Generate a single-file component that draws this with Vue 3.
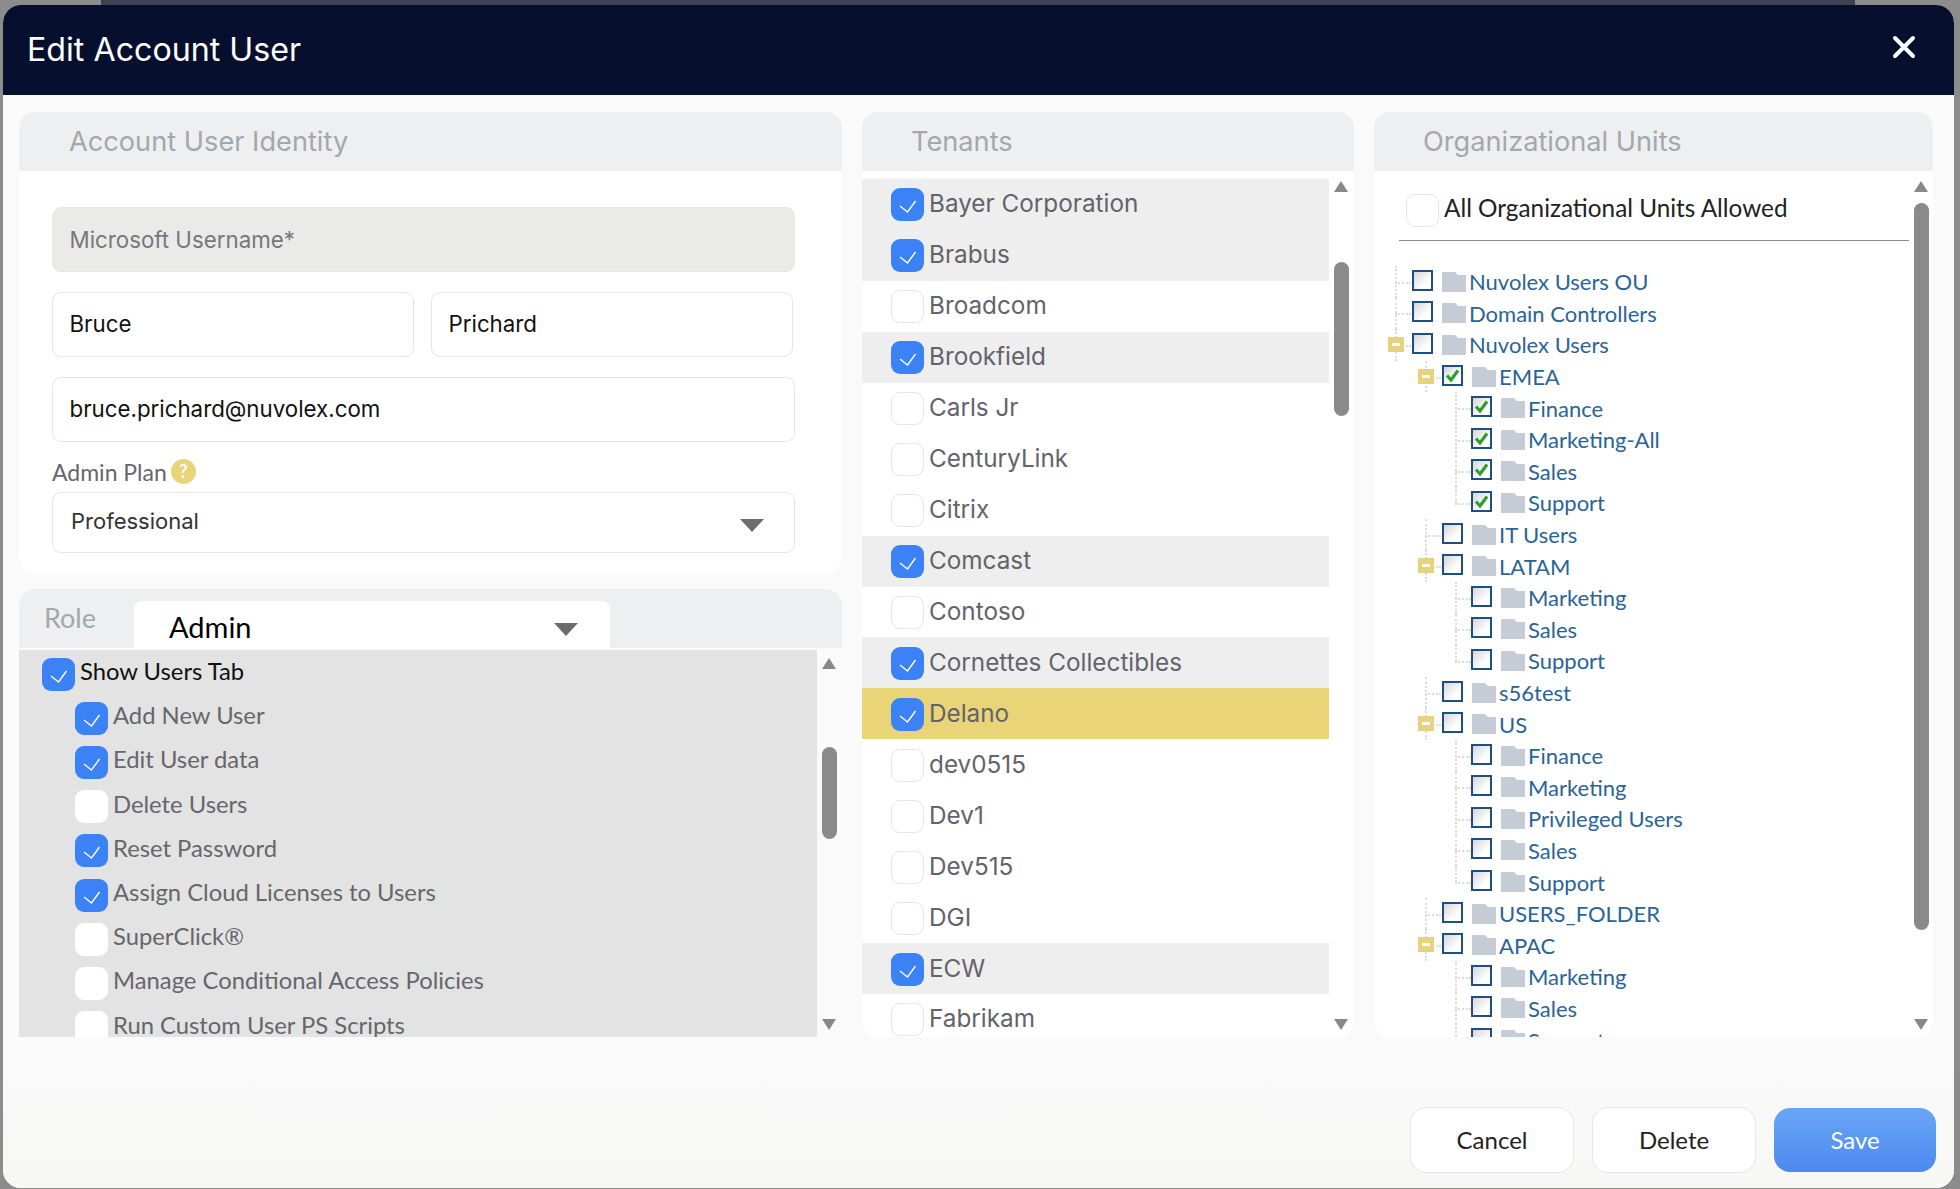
<script setup>
const roleItems = [
	{ label: "Show Users Tab", checked: true, top: true },
	{ label: "Add New User", checked: true },
	{ label: "Edit User data", checked: true },
	{ label: "Delete Users", checked: false },
	{ label: "Reset Password", checked: true },
	{ label: "Assign Cloud Licenses to Users", checked: true },
	{ label: "SuperClick®", checked: false },
	{ label: "Manage Conditional Access Policies", checked: false },
	{ label: "Run Custom User PS Scripts", checked: false },
];

const tenants = [
	{ name: "Bayer Corporation", checked: true },
	{ name: "Brabus", checked: true },
	{ name: "Broadcom", checked: false },
	{ name: "Brookfield", checked: true },
	{ name: "Carls Jr", checked: false },
	{ name: "CenturyLink", checked: false },
	{ name: "Citrix", checked: false },
	{ name: "Comcast", checked: true },
	{ name: "Contoso", checked: false },
	{ name: "Cornettes Collectibles", checked: true },
	{ name: "Delano", checked: true, active: true },
	{ name: "dev0515", checked: false },
	{ name: "Dev1", checked: false },
	{ name: "Dev515", checked: false },
	{ name: "DGI", checked: false },
	{ name: "ECW", checked: true },
	{ name: "Fabrikam", checked: false },
];

// flat list, level decides the indent and the connector lines
const units = [
	{ name: "Nuvolex Users OU", level: 0 },
	{ name: "Domain Controllers", level: 0 },
	{ name: "Nuvolex Users", level: 0, open: true },
	{ name: "EMEA", level: 1, open: true, checked: true },
	{ name: "Finance", level: 2, checked: true },
	{ name: "Marketing-All", level: 2, checked: true },
	{ name: "Sales", level: 2, checked: true },
	{ name: "Support", level: 2, checked: true, last: true },
	{ name: "IT Users", level: 1 },
	{ name: "LATAM", level: 1, open: true },
	{ name: "Marketing", level: 2 },
	{ name: "Sales", level: 2 },
	{ name: "Support", level: 2, last: true },
	{ name: "s56test", level: 1 },
	{ name: "US", level: 1, open: true },
	{ name: "Finance", level: 2 },
	{ name: "Marketing", level: 2 },
	{ name: "Privileged Users", level: 2 },
	{ name: "Sales", level: 2 },
	{ name: "Support", level: 2, last: true },
	{ name: "USERS_FOLDER", level: 1 },
	{ name: "APAC", level: 1, open: true },
	{ name: "Marketing", level: 2 },
	{ name: "Sales", level: 2 },
	{ name: "Support", level: 2 },
];
</script>

<template>
	<div class="page">
		<div class="strip"></div>
		<div class="modal">
			<header class="modal-head">
				<h1>Edit Account User</h1>
				<svg class="close" viewBox="0 0 24 24" width="24" height="24">
					<path d="M3 3 21 21M21 3 3 21" stroke="#fff" stroke-width="4" stroke-linecap="round" />
				</svg>
			</header>

			<div class="modal-body">
				<div class="col-left">
					<section class="panel identity">
						<h2 class="panel-title">Account User Identity</h2>
						<div class="form">
							<input class="field disabled" placeholder="Microsoft Username*" readonly />
							<div class="name-row">
								<input class="field" value="Bruce" readonly />
								<input class="field" value="Prichard" readonly />
							</div>
							<input class="field" value="bruce.prichard@nuvolex.com" readonly />
							<div class="plan-label">
								Admin Plan
								<span class="help">?</span>
							</div>
							<div class="plan-select">
								<span class="plan-value">Professional</span>
								<i class="caret"></i>
							</div>
						</div>
					</section>

					<section class="panel role">
						<div class="role-head">
							<span class="role-label">Role</span>
							<div class="role-tab">
								<span>Admin</span>
								<i class="caret"></i>
							</div>
						</div>
						<div class="scroll-wrap">
							<ul class="role-list">
								<li v-for="item in roleItems" :key="item.label" :class="{ top: item.top }">
									<span class="box" :class="{ on: item.checked }">
										<svg v-if="item.checked" viewBox="0 0 33 33" width="33" height="33">
											<path d="M9 18 16.5 24 24.5 13" fill="none" stroke="#fff" stroke-width="1.4" />
										</svg>
									</span>
									<span class="role-text">{{ item.label }}</span>
								</li>
							</ul>
							<div class="scrollbar role-bar">
								<i class="arrow up"></i>
								<i class="thumb"></i>
								<i class="arrow down"></i>
							</div>
						</div>
					</section>
				</div>

				<section class="panel tenants">
					<h2 class="panel-title">Tenants</h2>
					<div class="scroll-wrap">
						<ul class="tenant-list">
							<li
								v-for="t in tenants"
								:key="t.name"
								:class="{ picked: t.checked, active: t.active }"
							>
								<span class="box" :class="{ on: t.checked }">
									<svg v-if="t.checked" viewBox="0 0 33 33" width="33" height="33">
										<path d="M9 18 16.5 24 24.5 13" fill="none" stroke="#fff" stroke-width="1.4" />
									</svg>
								</span>
								<span class="tenant-name">{{ t.name }}</span>
							</li>
						</ul>
						<div class="scrollbar tenant-bar">
							<i class="arrow up"></i>
							<i class="thumb"></i>
							<i class="arrow down"></i>
						</div>
					</div>
				</section>

				<section class="panel units">
					<h2 class="panel-title">Organizational Units</h2>
					<div class="scroll-wrap">
						<div class="units-inner">
							<div class="all-units">
								<span class="box"></span>
								<span>All Organizational Units Allowed</span>
							</div>
							<ul class="tree">
								<li
									v-for="(u, i) in units"
									:key="i"
									class="node"
									:class="['lvl' + u.level, { last: u.last, open: u.open }]"
								>
									<span v-if="u.open" class="toggle"></span>
									<span class="tree-box">
										<svg v-if="u.checked" viewBox="0 0 17 17" width="17" height="17">
											<path d="M3 8.5 7 13 14 3.5" fill="none" stroke="#2ca02c" stroke-width="3.2" />
										</svg>
									</span>
									<svg class="folder" viewBox="0 0 24 20" width="24" height="20">
										<path d="M0 0H13L16 3H24V20H0Z" fill="#c6ccd6" />
									</svg>
									<span class="unit-name">{{ u.name }}</span>
								</li>
							</ul>
						</div>
						<div class="scrollbar unit-bar">
							<i class="arrow up"></i>
							<i class="thumb"></i>
							<i class="arrow down"></i>
						</div>
					</div>
				</section>
			</div>

			<footer class="modal-foot">
				<button class="btn">Cancel</button>
				<button class="btn">Delete</button>
				<button class="btn save">Save</button>
			</footer>
		</div>
	</div>
</template>

<style>
html,
body {
	margin: 0;
	background: #8c8c8c;
}
</style>

<style scoped>
.page {
	--head-font: Inter, "Noto Sans", sans-serif;
	--body-font: Lato, "Noto Sans", sans-serif;

	width: 1960px;
	height: 1189px;
	overflow: hidden;
	background: #8c8c8c;
	box-sizing: border-box;
	font-family: var(--body-font);
}

.strip {
	height: 5px;
	margin: 0 105px 0 101px;
	background: #3d4152;
}

.modal {
	width: 1951px;
	height: 1183px;
	margin-left: 3px;
	border-radius: 18px;
	overflow: hidden;
	background: #fafafa;
	display: flex;
	flex-direction: column;
}

.modal-head {
	height: 90px;
	flex: none;
	background: #060f2e;
	display: flex;
	align-items: center;
	justify-content: space-between;
	padding: 0 38px 0 24px;
	box-sizing: border-box;
}

.modal-head h1 {
	margin: 0 0 2px;
	font: 400 32.2px var(--head-font);
	color: #fff;
}

.close {
	margin-top: -6px;
}

.modal-body {
	height: 942px;
	flex: none;
	box-sizing: border-box;
	padding: 17px 21px 0 16px;
	display: grid;
	grid-template-columns: 823px 492px 559px;
	column-gap: 20px;
	align-items: start;
}

.col-left {
	display: flex;
	flex-direction: column;
	gap: 16px;
}

.panel {
	background: #fff;
	border-radius: 16px;
	overflow: hidden;
}

.panel-title {
	margin: 0;
	height: 59px;
	background: #eeeff1;
	font: 400 27.2px/59px var(--head-font);
	color: #a4a7ab;
}

.identity .panel-title {
	padding-left: 50px;
}

.tenants .panel-title {
	padding-left: 49px;
}

.units .panel-title {
	padding-left: 49px;
}

.identity {
	height: 461px;
}

.form {
	padding: 36px 47px 0 33px;
	display: flex;
	flex-direction: column;
}

.field {
	width: 100%;
	height: 65px;
	box-sizing: border-box;
	padding: 0 17px 2px 16.5px;
	border: 1.5px solid #e6e6e6;
	border-radius: 9px;
	outline: none;
	background: #fff;
	font: 400 22.3px var(--head-font);
	color: #111;
}

.field.disabled {
	padding-bottom: 0;
	background: #eaeae9;
	margin-bottom: 20px;
}

.field.disabled::placeholder {
	color: #77777a;
	opacity: 1;
}

.name-row {
	display: flex;
	gap: 17px;
	margin-bottom: 20px;
}

.name-row .field {
	width: 362px;
}

.plan-label {
	margin-top: 14px;
	margin-bottom: 5px;
	height: 31px;
	display: flex;
	align-items: center;
	gap: 4px;
	font-size: 23px;
	color: #66666c;
}

.help {
	width: 25px;
	height: 25px;
	border-radius: 50%;
	background: #e9d478;
	color: #fff;
	font-size: 18px;
	font-weight: 700;
	text-align: center;
	line-height: 25px;
}

.plan-select {
	height: 61px;
	box-sizing: border-box;
	padding: 0 30px 0 18px;
	border: 1.5px solid #e6e6e6;
	border-radius: 9px;
	display: flex;
	align-items: center;
	justify-content: space-between;
	font: 400 22px var(--head-font);
	color: #333;
}

.plan-value {
	margin-top: -4px;
}

.caret {
	width: 0;
	height: 0;
	border-left: 12px solid transparent;
	border-right: 12px solid transparent;
	border-top: 13px solid #6b6b70;
	margin-top: 6px;
}

.role {
	height: 448px;
	border-radius: 16px 16px 0 0;
	background: #fafafa;
}

.role-head {
	height: 59px;
	background: #eeeff1;
	display: flex;
	align-items: flex-end;
	padding-left: 25px;
}

.role-label {
	width: 90px;
	align-self: flex-start;
	padding-top: 12px;
	font-size: 27px;
	color: #a4a7ab;
}

.role-tab {
	width: 476px;
	height: 47px;
	box-sizing: border-box;
	padding: 3px 32px 0 35px;
	background: #fff;
	border-radius: 8px 8px 0 0;
	display: flex;
	align-items: center;
	justify-content: space-between;
	font-size: 29px;
	color: #000;
}

.scroll-wrap {
	display: flex;
	overflow: hidden;
}

.role .scroll-wrap {
	height: 387px;
	margin-top: 2px;
}

.role-list {
	width: 798px;
	flex: none;
	margin: 0;
	padding: 2px 0 0;
	list-style: none;
	background: #e3e3e3;
	overflow: hidden;
}

.role-list li {
	height: 44.2px;
	display: flex;
	align-items: center;
	gap: 5px;
	padding-left: 56px;
	font-size: 23.8px;
	color: #66666c;
}

.role-list li.top {
	padding-left: 23px;
	color: #111;
}

.role-text {
	margin-top: -6px;
}

.box {
	width: 33px;
	height: 33px;
	flex: none;
	box-sizing: border-box;
	background: #fff;
	border: 1.5px solid #e6e6e6;
	border-radius: 9px;
	display: block;
}

.role-list .box:not(.on) {
	border-color: #fff;
}

.box.on {
	background: #3b82f6;
	border: none;
}

.box svg {
	display: block;
}

.scrollbar {
	position: relative;
	width: 15px;
	flex: none;
}

.role-bar {
	margin-left: 5px;
}

.tenant-bar {
	margin-left: 5px;
}

.unit-bar {
	margin-left: 5px;
}

.arrow {
	position: absolute;
	left: 0;
	width: 0;
	height: 0;
	border-left: 7.5px solid transparent;
	border-right: 7.5px solid transparent;
}

.arrow.up {
	top: 10px;
	border-bottom: 11px solid #888;
}

.role-bar .arrow.up {
	top: 8px;
}

.arrow.down {
	bottom: 7px;
	border-top: 11px solid #888;
}

.thumb {
	position: absolute;
	left: 0;
	width: 15px;
	background: #8a8a8a;
	border-radius: 8px;
}

.role-bar .thumb {
	top: 97px;
	height: 92px;
}

.tenant-bar .thumb {
	top: 91px;
	height: 154px;
}

.unit-bar .thumb {
	top: 32px;
	height: 727px;
}

.tenants,
.units {
	height: 925px;
}

.tenants .scroll-wrap,
.units .scroll-wrap {
	height: 866px;
}

.tenant-list {
	width: 467px;
	flex: none;
	margin: 8px 0 0;
	padding: 0;
	list-style: none;
	overflow: hidden;
}

.tenant-list li {
	height: 50.95px;
	display: flex;
	align-items: center;
	gap: 5px;
	padding-left: 29px;
	font: 400 24.3px var(--head-font);
	color: #63636b;
}

.tenant-name {
	margin-top: -2px;
}

.tenant-list li.picked {
	background: #eee;
}

.tenant-list li.active {
	background: #e9d477;
}

.tenant-list .box {
	margin-top: 1px;
}

.units-inner {
	width: 535px;
	flex: none;
	overflow: hidden;
}

.all-units {
	height: 70px;
	margin: 0 0 0 25px;
	width: 510px;
	box-sizing: border-box;
	padding: 22px 0 0 7px;
	border-bottom: 1.5px solid #8a8a8a;
	display: flex;
	align-items: flex-start;
	gap: 5px;
	font-size: 24.3px;
	color: #222;
}

.all-units .box {
	margin-top: 1px;
}

.tree {
	margin: 25px 0 0;
	padding: 0;
	list-style: none;
}

.node {
	position: relative;
	height: 31.6px;
	display: flex;
	align-items: center;
}

/* connector lines */
.node::before {
	content: "";
	position: absolute;
	top: 0;
	bottom: 0;
	border-left: 2px dotted #dcdcdc;
}

.node::after {
	content: "";
	position: absolute;
	top: 50%;
	border-top: 2px dotted #dcdcdc;
	width: 16px;
}

.node.last::before {
	bottom: 50%;
}

.lvl0 {
	padding-left: 38px;
}

.lvl0::before {
	left: 21px;
}

.lvl0::after {
	left: 21px;
}

.lvl1 {
	padding-left: 68px;
}

.lvl1::before {
	left: 51px;
}

.lvl1::after {
	left: 51px;
}

.lvl2 {
	padding-left: 97px;
}

.lvl2::before {
	left: 81px;
}

.lvl2::after {
	left: 81px;
}

.toggle {
	position: absolute;
	z-index: 1;
	top: 8px;
	width: 16px;
	height: 15px;
	background: #e9d27e;
}

.toggle::after {
	content: "";
	position: absolute;
	left: 4px;
	right: 4px;
	top: 6px;
	height: 3px;
	background: #fff;
}

.lvl0 .toggle {
	left: 14px;
}

.lvl1 .toggle {
	left: 44px;
}

.tree-box {
	position: relative;
	z-index: 1;
	width: 21px;
	height: 21px;
	flex: none;
	box-sizing: border-box;
	border: 2px solid #1f4e86;
	background: linear-gradient(135deg, #d6d6d6, #fff 70%);
	margin-top: -3px;
}

.tree-box svg {
	display: block;
}

.folder {
	flex: none;
	margin-left: 9px;
	margin-right: 3px;
}

.unit-name {
	font-size: 22px;
	color: #2a6496;
	white-space: nowrap;
}

.modal-foot {
	flex: 1;
	background: linear-gradient(#fafafa, #f7f7f6);
	display: flex;
	justify-content: flex-end;
	align-items: flex-start;
	gap: 18px;
	padding: 70px 18px 0 0;
}

.btn {
	width: 164px;
	height: 66px;
	padding-bottom: 3px;
	border: 1.5px solid #e6e6e6;
	border-radius: 16px;
	background: #fff;
	font: 400 24px var(--body-font);
	color: #222;
}

.btn.save {
	width: 162px;
	height: 64px;
	margin-top: 1px;
	border: none;
	background: linear-gradient(#6aa6f6, #4b89f0);
	color: #fff;
}
</style>
